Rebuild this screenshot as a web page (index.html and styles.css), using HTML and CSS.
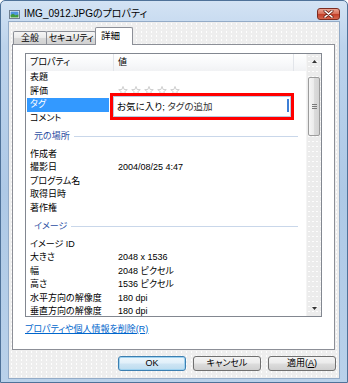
FILE: index.html
```html
<!DOCTYPE html>
<html lang="ja">
<head>
<meta charset="utf-8">
<title>IMG_0912.JPGのプロパティ</title>
<link rel="stylesheet" href="styles.css">
</head>
<body>
<div class="window">
  <div class="titlebar">
    <svg class="app-icon" width="11" height="9" viewBox="0 0 11 9">
      <rect x="0.5" y="0.5" width="10" height="8" fill="#fff" stroke="#6f7f90"/>
      <rect x="1.5" y="1.5" width="8" height="4" fill="#4f95dc"/>
      <path d="M1.5 7.5 L1.5 5 L4 3.8 L6.5 5.2 L9.5 4.5 L9.5 7.5 Z" fill="#3f9a3c"/>
    </svg>
    <span class="title">IMG_0912.JPGのプロパティ</span>
    <div class="close">
      <svg width="11" height="8" viewBox="0 0 11 8">
        <path d="M2 1 L9 7 M9 1 L2 7" stroke="#6b2418" stroke-width="3" stroke-linecap="round"/>
        <path d="M2 1 L9 7 M9 1 L2 7" stroke="#fff" stroke-width="1.6" stroke-linecap="round"/>
      </svg>
    </div>
  </div>
  <div class="client">
    <div class="tabs">
      <div class="tab">全般</div>
      <div class="tab">セキュリティ</div>
      <div class="tab active">詳細</div>
    </div>
    <div class="panel">
      <div class="list">
        <div class="list-main">
          <div class="header">
            <div class="hcol c1">プロパティ</div>
            <div class="hcol c2">値</div>
            <div class="hcol c3"></div>
          </div>
          <div class="rows">
            <div class="row"><span class="k">表題</span><span class="v"></span></div>
            <div class="row"><span class="k">評価</span><span class="v">
              <svg class="stars" width="63" height="10" viewBox="0 0 63 10">
                <defs>
                  <polygon id="st" points="5,0.5 6.12,3.46 9.28,3.61 6.81,5.59 7.65,8.64 5,6.9 2.35,8.64 3.19,5.59 0.72,3.61 3.88,3.46" fill="#fff" stroke="#c9c9c9" stroke-width="0.9"/>
                </defs>
                <use href="#st" x="0"/><use href="#st" x="13"/><use href="#st" x="26"/><use href="#st" x="39"/><use href="#st" x="52"/>
              </svg></span></div>
            <div class="row sel"><span class="k">タグ</span><span class="v"></span></div>
            <div class="row"><span class="k">コメント</span><span class="v"></span></div>
            <div class="group"><span class="gt">元の場所</span><span class="gl"></span></div>
            <div class="row"><span class="k">作成者</span><span class="v"></span></div>
            <div class="row"><span class="k">撮影日</span><span class="v">2004/08/25 4:47</span></div>
            <div class="row"><span class="k">プログラム名</span><span class="v"></span></div>
            <div class="row"><span class="k">取得日時</span><span class="v"></span></div>
            <div class="row"><span class="k">著作権</span><span class="v"></span></div>
            <div class="group"><span class="gt">イメージ</span><span class="gl"></span></div>
            <div class="row"><span class="k">イメージ ID</span><span class="v"></span></div>
            <div class="row"><span class="k">大きさ</span><span class="v">2048 x 1536</span></div>
            <div class="row"><span class="k">幅</span><span class="v">2048 ピクセル</span></div>
            <div class="row"><span class="k">高さ</span><span class="v">1536 ピクセル</span></div>
            <div class="row"><span class="k">水平方向の解像度</span><span class="v">180 dpi</span></div>
            <div class="row"><span class="k">垂直方向の解像度</span><span class="v">180 dpi</span></div>
          </div>
          <div class="editor">
            <div class="field"><span class="fav">お気に入り;</span> <span class="add">タグの追加</span><span class="caret"></span></div>
          </div>
        </div>
        <div class="scrollbar">
          <div class="arrow up"><svg width="5" height="3" viewBox="0 0 5 3"><path d="M0 3 L2.5 0 L5 3 Z" fill="#333"/></svg></div>
          <div class="track">
            <div class="thumb"><span class="grip"></span></div>
          </div>
          <div class="arrow down"><svg width="5" height="3" viewBox="0 0 5 3"><path d="M0 0 L2.5 3 L5 0 Z" fill="#333"/></svg></div>
        </div>
      </div>
      <a class="link" href="#">プロパティや個人情報を削除(R)</a>
    </div>
    <div class="buttons">
      <div class="btn default">OK</div>
      <div class="btn">キャンセル</div>
      <div class="btn">適用(<u>A</u>)</div>
    </div>
  </div>
</div>
</body>
</html>
```

FILE: styles.css
```css
html, body {
  margin: 0;
  padding: 0;
}
body {
  width: 348px;
  height: 383px;
  overflow: hidden;
  background: #fff;
  font-family: "Liberation Sans", "Noto Sans CJK JP", sans-serif;
  font-size: 9px;
  font-feature-settings: "palt";
  color: #000;
}

.window {
  box-sizing: border-box;
  width: 348px;
  height: 383px;
  border: 1px solid #4f7299;
  border-radius: 5px 5px 0 0;
  background: linear-gradient(180deg, #d3e3f4 0%, #bcd3ec 12%, #aec9e6 50%, #b9d1ea 100%);
  padding: 0 7px 3px 7px;
  display: flex;
  flex-direction: column;
}

.titlebar {
  box-sizing: border-box;
  height: 20px;
  padding-top: 6px;
  display: flex;
  align-items: center;
}
.app-icon {
  margin-left: 1px;
  flex: none;
}
.title {
  margin-left: 4px;
  font-size: 10px;
  line-height: 12px;
  color: #000;
  white-space: nowrap;
}
.close {
  margin-left: auto;
  box-sizing: border-box;
  width: 23px;
  height: 12px;
  border: 1px solid #7c2c20;
  border-radius: 3px;
  background: linear-gradient(180deg, #eba594 0%, #d9735c 45%, #c4402a 55%, #d6664c 100%);
  display: flex;
  align-items: center;
  justify-content: center;
}

.client {
  flex: 1;
  border: 1px solid #93abc7;
  background-color: #eeeeee;
  background-image: radial-gradient(circle, rgba(255,255,255,0.95) 0.55px, rgba(255,255,255,0) 0.9px);
  background-size: 5px 4px;
  display: flex;
  flex-direction: column;
}

.tabs {
  display: flex;
  align-items: flex-end;
  padding: 5px 0 0 4px;
  height: 23px;
  box-sizing: border-box;
  margin-bottom: -1px;
  position: relative;
  z-index: 2;
}
.tab {
  box-sizing: border-box;
  height: 13px;
  margin-bottom: 1px;
  border: 1px solid #8c8f97;
  border-bottom: none;
  border-radius: 2px 2px 0 0;
  background: linear-gradient(180deg, #f6f6f6 0%, #e9e9e9 50%, #d9d9d9 51%, #d2d2d2 100%);
  padding: 0;
  line-height: 12px;
  font-size: 9px;
  white-space: nowrap;
  overflow: visible;
}
.tab:nth-child(1) { width: 34px; text-align: center; }
.tab:nth-child(2) { width: 50px; margin-left: -1px; text-align: center; letter-spacing: -0.4px; }
.tab.active {
  width: 38px;
  height: 18px;
  margin-bottom: 0;
  margin-left: -1px;
  background: #fff;
  line-height: 15px;
  font-size: 9.5px;
  padding: 0 5px;
  text-align: left;
}

.panel {
  box-sizing: border-box;
  height: 306px;
  margin: 0 4px 0 3px;
  border: 1px solid #8c8f97;
  background: #fff;
  display: flex;
  flex-direction: column;
  align-items: flex-start;
}

.list {
  box-sizing: border-box;
  width: 297px;
  height: 264px;
  margin: 8px 0 0 12px;
  border: 1px solid #828790;
  display: flex;
  background: #fff;
}
.list-main {
  position: relative;
  flex: 1;
  overflow: hidden;
}
.header {
  display: flex;
  height: 17px;
  background: linear-gradient(180deg, #ffffff 0%, #f7f8fa 60%, #f1f2f4 100%);
}
.hcol {
  box-sizing: border-box;
  line-height: 17px;
  padding-left: 4px;
  border-right: 1px solid #e2e5ea;
  white-space: nowrap;
}
.hcol.c1 { width: 88px; }
.hcol.c2 { width: 180px; }
.hcol.c3 { flex: 1; border-right: none; }

.rows {
  display: flex;
  flex-direction: column;
}
.row {
  display: flex;
  height: 13.5px;
  line-height: 13.5px;
  white-space: nowrap;
}
.row .k {
  box-sizing: border-box;
  width: 92px;
  padding-left: 4px;
  flex: none;
}
.row .v {
  display: flex;
  align-items: center;
}
.row.sel .k {
  width: 82px;
  margin-left: 1px;
  padding-left: 3px;
  background: #3399ff;
  color: #fff;
}
.stars {
  margin-top: -1px;
}

.group {
  height: 22.5px;
  display: flex;
  align-items: center;
  padding: 0 8px 0 8px;
}
.gt {
  color: #2c4ea3;
  line-height: 12px;
  white-space: nowrap;
}
.gl {
  flex: 1;
  height: 1px;
  margin-left: 4px;
  background: #c9d7ea;
}

.editor {
  position: absolute;
  left: 84px;
  top: 39px;
  box-sizing: border-box;
  width: 184px;
  height: 27px;
  border: 3px solid #ff0000;
  background: #fff;
  padding: 0;
}
.field {
  position: relative;
  box-sizing: border-box;
  height: 100%;
  border: 1px solid #b7cbe2;
  padding-left: 3px;
  line-height: 19px;
  white-space: nowrap;
  font-size: 9.5px;
}
.add { color: #333; }
.caret {
  position: absolute;
  right: 1px;
  top: 2px;
  width: 2px;
  height: 13px;
  background: #3d7fd6;
}

.scrollbar {
  box-sizing: border-box;
  width: 15px;
  display: flex;
  flex-direction: column;
  background-color: #ececec;
  background-image: radial-gradient(circle, rgba(255,255,255,0.9) 0.5px, rgba(255,255,255,0) 0.9px);
  background-size: 4px 5px;
  border-left: 1px solid #f4f4f4;
}
.arrow {
  height: 15px;
  display: flex;
  align-items: center;
  justify-content: center;
}
.track {
  flex: 1;
  padding-top: 8px;
}
.thumb {
  box-sizing: border-box;
  margin: 0 1px;
  height: 59px;
  border: 1px solid #9c9c9c;
  border-radius: 2px;
  background: linear-gradient(90deg, #f6f6f6 0%, #ebebeb 50%, #dcdcdc 51%, #d3d3d3 100%);
  display: flex;
  align-items: center;
  justify-content: center;
}
.grip {
  width: 5px;
  height: 5px;
  background: repeating-linear-gradient(180deg, #7a7a7a 0px, #7a7a7a 1px, transparent 1px, transparent 2px);
}

.link {
  margin: 6px 0 0 12px;
  color: #0066cc;
  text-decoration: underline;
  line-height: 13px;
  white-space: nowrap;
}

.buttons {
  display: flex;
  justify-content: flex-end;
  gap: 7px;
  margin-top: 6px;
  padding-right: 3px;
}
.btn {
  box-sizing: border-box;
  width: 68px;
  height: 15px;
  border: 1px solid #707070;
  border-radius: 3px;
  background: linear-gradient(180deg, #f4f4f4 0%, #ebebeb 48%, #dddddd 52%, #cfcfcf 100%);
  text-align: center;
  line-height: 13px;
  font-size: 9px;
  white-space: nowrap;
}
.btn.default {
  border-color: #3c7fb1;
  background: linear-gradient(180deg, #eef7fc 0%, #e0eff9 48%, #cfe5f4 52%, #bcdcef 100%);
  box-shadow: inset 0 0 0 1px #9fd2f0;
}
```
